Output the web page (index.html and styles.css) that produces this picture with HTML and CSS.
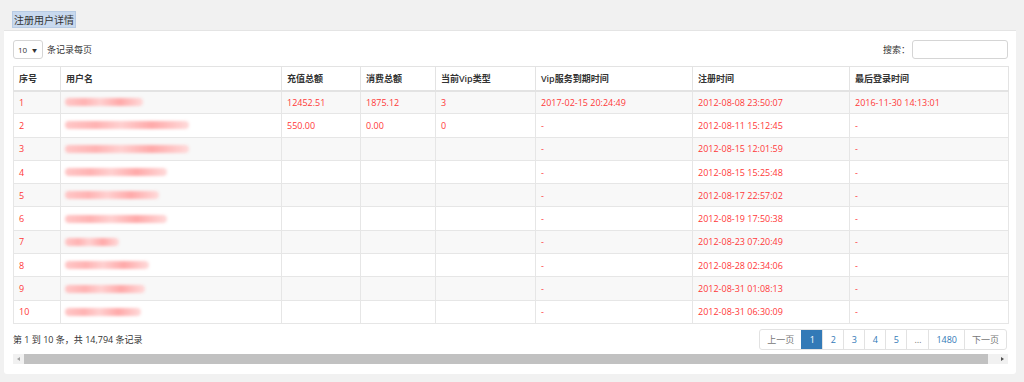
FILE: index.html
```html
<!DOCTYPE html>
<html lang="zh-CN">
<head>
<meta charset="utf-8">
<title>注册用户详情</title>
<link rel="stylesheet" href="styles.css">
</head>
<body>
<div class="page">
  <div class="title-bar"><span class="title">注册用户详情</span></div>
  <div class="panel">
    <div class="toolbar">
      <div class="length">
        <div class="select"><span>10</span><span class="caret">▼</span></div>
        <span>条记录每页</span>
      </div>
      <div class="search">
        <span>搜索：</span>
        <div class="input"></div>
      </div>
    </div>
    <table class="grid">
      <colgroup>
        <col class="c1"><col class="c2"><col class="c3"><col class="c4"><col class="c5"><col class="c6"><col class="c7"><col class="c8">
      </colgroup>
      <thead>
        <tr><th>序号</th><th>用户名</th><th>充值总额</th><th>消费总额</th><th>当前Vip类型</th><th>Vip服务到期时间</th><th>注册时间</th><th>最后登录时间</th></tr>
      </thead>
      <tbody>
        <tr><td>1</td><td><span class="blur" style="width:78px"></span></td><td>12452.51</td><td>1875.12</td><td>3</td><td>2017-02-15 20:24:49</td><td>2012-08-08 23:50:07</td><td>2016-11-30 14:13:01</td></tr>
        <tr><td>2</td><td><span class="blur" style="width:124px"></span></td><td>550.00</td><td>0.00</td><td>0</td><td>-</td><td>2012-08-11 15:12:45</td><td>-</td></tr>
        <tr><td>3</td><td><span class="blur" style="width:124px"></span></td><td></td><td></td><td></td><td>-</td><td>2012-08-15 12:01:59</td><td>-</td></tr>
        <tr><td>4</td><td><span class="blur" style="width:102px"></span></td><td></td><td></td><td></td><td>-</td><td>2012-08-15 15:25:48</td><td>-</td></tr>
        <tr><td>5</td><td><span class="blur" style="width:94px"></span></td><td></td><td></td><td></td><td>-</td><td>2012-08-17 22:57:02</td><td>-</td></tr>
        <tr><td>6</td><td><span class="blur" style="width:102px"></span></td><td></td><td></td><td></td><td>-</td><td>2012-08-19 17:50:38</td><td>-</td></tr>
        <tr><td>7</td><td><span class="blur" style="width:54px"></span></td><td></td><td></td><td></td><td>-</td><td>2012-08-23 07:20:49</td><td>-</td></tr>
        <tr><td>8</td><td><span class="blur" style="width:84px"></span></td><td></td><td></td><td></td><td>-</td><td>2012-08-28 02:34:06</td><td>-</td></tr>
        <tr><td>9</td><td><span class="blur" style="width:80px"></span></td><td></td><td></td><td></td><td>-</td><td>2012-08-31 01:08:13</td><td>-</td></tr>
        <tr><td>10</td><td><span class="blur" style="width:76px"></span></td><td></td><td></td><td></td><td>-</td><td>2012-08-31 06:30:09</td><td>-</td></tr>
      </tbody>
    </table>
    <div class="footer">
      <div class="info">第 1 到 10 条，共 14,794 条记录</div>
      <ul class="pager">
        <li class="muted">上一页</li>
        <li class="active">1</li>
        <li>2</li>
        <li>3</li>
        <li>4</li>
        <li>5</li>
        <li class="muted">…</li>
        <li>1480</li>
        <li class="muted">下一页</li>
      </ul>
    </div>
    <div class="hscroll">
      <span class="arrow left"></span>
      <span class="thumb"></span>
      <span class="arrow right"></span>
    </div>
  </div>
</div>
</body>
</html>
```

FILE: styles.css
```css
* { box-sizing: border-box; }
html, body { margin: 0; padding: 0; }
body {
  background: #f1f1f1;
  font-family: "Open Sans", "Noto Sans CJK SC", sans-serif;
  font-size: 9px;
  color: #333;
  width: 1024px;
  height: 382px;
  overflow: hidden;
}
.page { padding: 0 8px 0 4px; }
.title-bar {
  height: 31px;
  padding: 11px 0 0 8px;
  border-bottom: 1px solid #e4e4e4;
}
.title {
  display: inline-block;
  height: 17px;
  line-height: 16px;
  padding: 0 1px;
  font-size: 10px;
  color: #333;
  background: #c8d9ee;
  border: 1px solid #b7cbe4;
}
.panel {
  background: #fff;
  padding: 9px 8px 10px 9px;
  border-radius: 0 0 3px 3px;
}
.toolbar {
  display: flex;
  justify-content: space-between;
  align-items: center;
  height: 19px;
  margin-bottom: 7px;
}
.length, .search { display: flex; align-items: center; gap: 4px; color: #333; }
.select {
  width: 30px;
  height: 19px;
  border: 1px solid #d5d5d5;
  border-radius: 3px;
  display: flex;
  align-items: center;
  justify-content: space-between;
  padding: 0 5px 0 4px;
  font-size: 8px;
}
.caret { font-size: 5px; color: #333; }
.search { gap: 2px; }
.input {
  width: 96px;
  height: 19px;
  border: 1px solid #d5d5d5;
  border-radius: 3px;
}
.grid {
  width: 995px;
  border-collapse: collapse;
  table-layout: fixed;
  border: 1px solid #e3e3e3;
}
.c1 { width: 47px; } .c2 { width: 221px; } .c3 { width: 79px; } .c4 { width: 75px; }
.c5 { width: 100px; } .c6 { width: 157px; } .c7 { width: 157px; } .c8 { width: 159px; }
.grid th {
  height: 24px;
  text-align: left;
  font-weight: 600;
  color: #333;
  padding: 0 5px;
  border: 1px solid #e3e3e3;
  border-bottom: 2px solid #e3e3e3;
  white-space: nowrap;
}
.grid td {
  height: 23.3px;
  padding: 0 5px;
  color: #ff3838;
  border: 1px solid #e6e6e6;
  white-space: nowrap;
}
.grid tbody tr:nth-child(odd) td { background: #f8f8f8; }
.blur {
  display: block;
  height: 8px;
  margin-left: -1px;
  border-radius: 4px;
  background: linear-gradient(90deg, #ffc7c7 0%, #ffb3b3 25%, #ffd0d0 45%, #ffa9a9 70%, #ffdada 100%);
  filter: blur(1.6px);
}
.footer {
  display: flex;
  justify-content: space-between;
  align-items: center;
  margin-top: 5px;
  height: 21px;
}
.info { color: #333; }
.pager {
  display: flex;
  list-style: none;
  margin: 0 1px 0 0;
  padding: 0;
  height: 21px;
  border: 1px solid #e2e2e2;
  border-radius: 3px;
  overflow: hidden;
}
.pager li {
  padding: 0 7px;
  line-height: 19px;
  color: #337ab7;
  border-left: 1px solid #e2e2e2;
  text-align: center;
  min-width: 21px;
}
.pager li:first-child { border-left: 0; }
.pager li.muted { color: #777; }
.pager li.active { background: #337ab7; color: #fff; border-color: #337ab7; }
.hscroll {
  display: flex;
  height: 10px;
  margin-top: 4px;
  background: #f1f1f1;
  width: 995px;
}
.thumb { flex: 1; background: #c1c1c1; }
.arrow { width: 11px; position: relative; }
.arrow.right { width: 20px; }
.arrow::after {
  content: "";
  position: absolute;
  top: 3px;
  border-top: 2px solid transparent;
  border-bottom: 2px solid transparent;
}
.arrow.left::after { left: 4px; border-right: 3px solid #a3a3a3; }
.arrow.right::after { right: 4px; border-left: 3px solid #505050; }
```
